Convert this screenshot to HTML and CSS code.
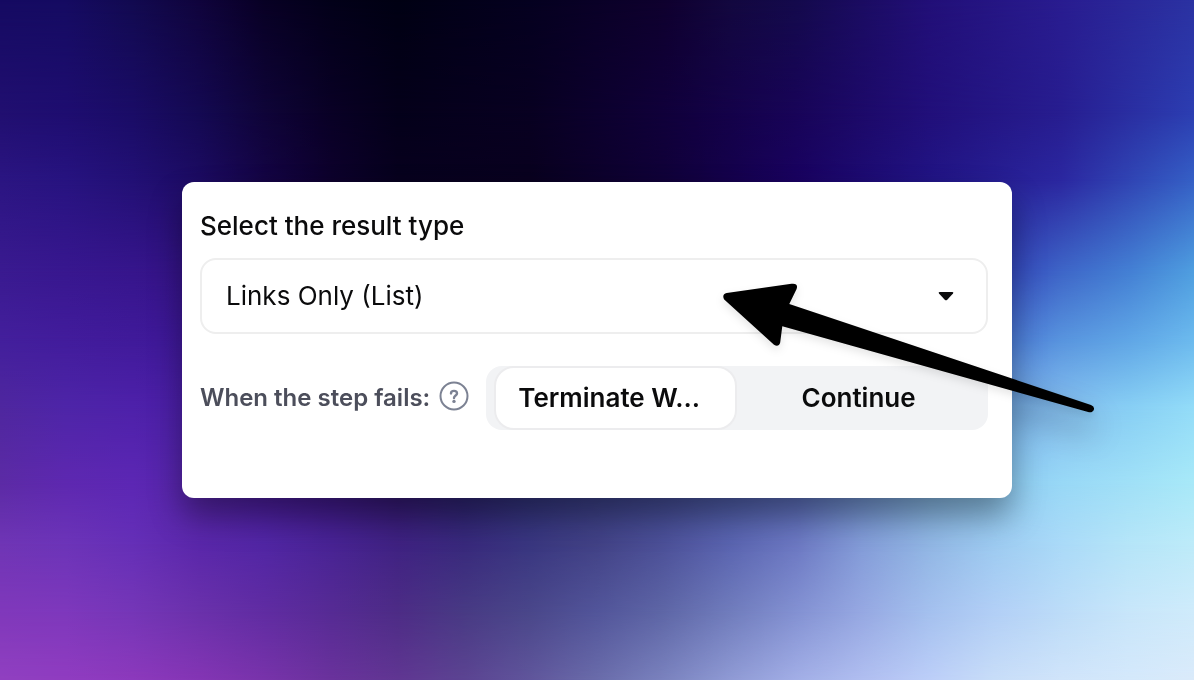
FILE: index.html
```html
<!DOCTYPE html>
<html lang="en">
<head>
<meta charset="utf-8">
<meta name="viewport" content="width=device-width, initial-scale=1">
<title>Result type</title>
<link rel="stylesheet" href="styles.css">
</head>
<body>
<div class="backdrop" aria-hidden="true">
  <div class="band band-1"></div>
  <div class="band band-2"></div>
  <div class="band band-3"></div>
  <div class="band band-4"></div>
  <div class="band band-5"></div>
  <div class="band band-6"></div>
  <div class="band band-7"></div>
  <div class="band band-8"></div>
  <div class="band band-9"></div>
  <div class="band band-10"></div>
</div>
<main class="stage">
  <form class="card">
    <label class="title" for="result-type">Select the result type</label>
    <div class="select-box">
      <select class="select" id="result-type">
        <option>Links Only (List)</option>
      </select>
      <svg class="caret" viewBox="0 0 16 10" aria-hidden="true"><path d="M1.6 0.9H14.4Q16 1.2 15 2.6L9 8.9Q8 9.8 7 8.9L1 2.6Q0 1.2 1.6 0.9Z" fill="#0b0b0c"/></svg>
    </div>
    <div class="fail-row">
      <span class="fail-label" id="fail-label">When the step fails:</span>
      <button class="help" type="button" aria-label="Help">
        <svg viewBox="0 0 30 30" aria-hidden="true" fill="none" stroke="#7c8293"><circle cx="15" cy="15" r="13.5" stroke-width="2"/><path d="M12 12.4C12 10.8 13.3 9.9 15 9.9C16.8 9.9 18 11 18 12.4C18 14.5 15 14.5 15 17" stroke-width="2.4" stroke-linecap="round"/><circle cx="15" cy="20.4" r="1.7" fill="#7c8293" stroke="none"/></svg>
      </button>
      <div class="segments" role="group" aria-labelledby="fail-label">
        <button class="segment segment-active" type="button" aria-pressed="true">Terminate W...</button>
        <button class="segment" type="button" aria-pressed="false">Continue</button>
      </div>
    </div>
    <svg class="pointer" viewBox="720 280 380 70" aria-hidden="true"><path d="M726.7 293L791.5 283.8Q798.6 283 796.6 288.9L789.3 304L1091 405Q1094.5 406.6 1094 409.2Q1092.8 412.8 1089 412.3L782.3 326.3L780.2 342.5Q778.6 347.5 774 344.7L724.2 299.5Q721.5 294.5 726.7 293Z"/></svg>
  </form>
</main>
</body>
</html>
```
FILE: styles.css
```css
* {
  box-sizing: border-box;
}

body {
  margin: 0;
  min-height: 100vh;
  display: grid;
  font-family: Inter, "Liberation Sans", sans-serif;
  color: #0b0b0c;
  background: #140a50;
}

.backdrop,
.stage {
  grid-area: 1 / 1;
}

/* Colour mesh: each band fades in over the one before it. */
.backdrop {
  display: grid;
  overflow: hidden;
}

.band {
  grid-area: 1 / 1;
  mask-image: linear-gradient(to bottom, transparent var(--from), #000 var(--to));
}

.band-1 {
  mask-image: none;
  background: linear-gradient(to right, #150a62, #150b62 5.5%, #120a50 11.1%, #10043c 16.7%, #080024 22.2%, #030019 27.8%, #010013 33.3%, #050020 44.4%, #0f002e 55.5%, #13083f 61.1%, #140a4c 66.7%, #1b0c62 72.2%, #220f78 77.8%, #291c90 88.9%, #2b32a2);
}

.band-2 {
  --from: 0%;
  --to: 16.6%;
  background: linear-gradient(to right, #210f70, #1e0d70 5.5%, #1a0c66 11.1%, #140952 16.7%, #0f0438 22.2%, #090025 27.8%, #04001a 33.3%, #080021 44.4%, #10003a 55.5%, #180458 66.7%, #210f7a 77.8%, #271d90 88.9%, #2c3eb2);
}

.band-3 {
  --from: 16.6%;
  --to: 26.5%;
  background: linear-gradient(to right, #2b1582, #271380 5.5%, #221075 11.1%, #1c0b62 16.7%, #140444 22.2%, #0d002c 27.8%, #07001e 33.3%, #09001f 44.4%, #100038 55.5%, #190260 66.7%, #211484 77.8%, #2b27a0 88.9%, #3560c6);
}

.band-4 {
  --from: 26.5%;
  --to: 40%;
  background: linear-gradient(to right, #3a1a90, #38178f 5.5%, #36158c 11.1%, #341386 15.2%, #100038 40%, #1a0260 66.7%, #354abc 84.8%, #3e66c8 88.9%, #4480d4 94.6%, #4f9fe0);
}

.band-5 {
  --from: 40%;
  --to: 50%;
  background: linear-gradient(to right, #431f9c, #421c9c 5.5%, #401a9a 11.1%, #3e1898 15.2%, #20084c 40%, #2a1670 66.7%, #4c7cd6 84.8%, #5894de 88.9%, #60a6e6 94.6%, #6cbaee);
}

.band-6 {
  --from: 50%;
  --to: 60%;
  background: linear-gradient(to right, #4f279f, #4e25a8 5.5%, #4e21aa 11.1%, #4b1fa6 15.2%, #200c50 40%, #3a3ca0 66.7%, #78b0e8 84.8%, #86c0f0 88.9%, #88cff4 94.6%, #93dcf8);
}

.band-7 {
  --from: 60%;
  --to: 71%;
  background: linear-gradient(to right, #5c2ba5, #5e28b0 5.5%, #5c27b4 11.1%, #5424a6 16.7%, #481a98 22.2%, #3c1684 27.8%, #30166c 33.3%, #29226c 38.9%, #2f3278 44.4%, #3e4890 55.5%, #5368b4 66.7%, #7cb0dc 77.8%, #8fcdf2 84.8%, #98d8f6 88.9%, #a0e0f7 94.6%, #a8e9f8);
}

.band-8 {
  --from: 71%;
  --to: 80%;
  background: linear-gradient(to right, #6f35b5, #6c34b8 5.5%, #652fb7 11.1%, #5a27aa 16.7%, #5126a4 22.2%, #482394 27.8%, #3f2282 33.3%, #38297c 38.9%, #393680 44.4%, #424286 50%, #4c5098 55.5%, #5a64b0 61.1%, #6c78c2 66.7%, #839cd8 72.2%, #91b6e4 77.8%, #9dcbf1 83.3%, #aadaf8 88.9%, #b5e5f8 94.6%, #bdebf9);
}

.band-9 {
  --from: 80%;
  --to: 90%;
  background: linear-gradient(to right, #8038bb, #7e38bc 5.5%, #7536b7 11.1%, #6a31ab 16.7%, #602ca2 22.2%, #562b94 27.8%, #4d2c86 33.3%, #483a84 38.9%, #4a478a 44.4%, #52559a 50%, #5e66a6 55.5%, #707cbc 61.1%, #8391d2 66.7%, #96a8e2 72.2%, #a4c0ee 77.8%, #b2cff6 83.3%, #bcdcf8 88.9%, #c8e6fa 94.6%, #cfebfb);
}

.band-10 {
  --from: 90%;
  --to: 100%;
  background: linear-gradient(to right, #9040c0, #903cc0 5.5%, #8c39bc 11.1%, #8435b4 16.7%, #7833aa 22.2%, #6a329c 27.8%, #603692 33.3%, #5c4492 38.9%, #60569c 44.4%, #6a6caa 50%, #7a82be 55.5%, #8f9ad4 61.1%, #a2aee6 66.7%, #b0bef0 72.2%, #bccef8 77.8%, #c8ddf8 83.3%, #d0e4fa 88.9%, #d4e8fb 94.6%, #daeafa);
}

.stage {
  padding: 182px;
  filter: drop-shadow(0 18px 16px rgba(0, 0, 0, 0.36));
}

.card {
  position: relative;
  display: flex;
  flex-direction: column;
  padding: 28px 24px 68px 18px;
  border-radius: 12px;
  background: #fff;
}

.title {
  margin-bottom: 16px;
  font-size: 26px;
  line-height: 32px;
  font-weight: 500;
}

.select-box {
  display: grid;
  align-items: center;
}

.select {
  grid-area: 1 / 1;
  width: 100%;
  height: 76px;
  padding: 0 24px;
  border: 2px solid #eee;
  border-radius: 16px;
  background: #fff;
  color: inherit;
  font: 400 26px/32px Inter, "Liberation Sans", sans-serif;
  appearance: none;
}

.caret {
  grid-area: 1 / 1;
  justify-self: end;
  width: 16px;
  height: 10px;
  margin-right: 34px;
  pointer-events: none;
}

.fail-row {
  display: flex;
  align-items: center;
  margin-top: 32px;
}

.fail-label {
  color: #4c4e5b;
  font-size: 24px;
  line-height: 32px;
  font-weight: 600;
  white-space: nowrap;
}

.help {
  flex: none;
  width: 30px;
  height: 34px;
  margin: 0 17px 0 9px;
  padding: 0 0 4px;
  border: 0;
  background: none;
}

.help svg {
  display: block;
  width: 30px;
  height: 30px;
}

.segments {
  flex: 1;
  display: grid;
  grid-template-columns: 1fr 1fr;
  height: 64px;
  padding: 0 8px;
  border-radius: 16px;
  background: #f2f3f5;
}

.segment {
  min-width: 0;
  padding: 0 22px;
  border: 2px solid transparent;
  border-radius: 20px;
  background: none;
  color: inherit;
  font: 600 26px/32px Inter, "Liberation Sans", sans-serif;
  white-space: nowrap;
}

.segment-active {
  border-color: #ececee;
  background: #fff;
  text-align: left;
}

/* Annotation arrow laid over the card, running past its right edge. */
.pointer {
  position: absolute;
  top: 98px;
  right: -88px;
  width: 380px;
  height: 70px;
  overflow: visible;
  pointer-events: none;
  filter: drop-shadow(0 4px 4px rgba(0, 0, 0, 0.1));
}
```
